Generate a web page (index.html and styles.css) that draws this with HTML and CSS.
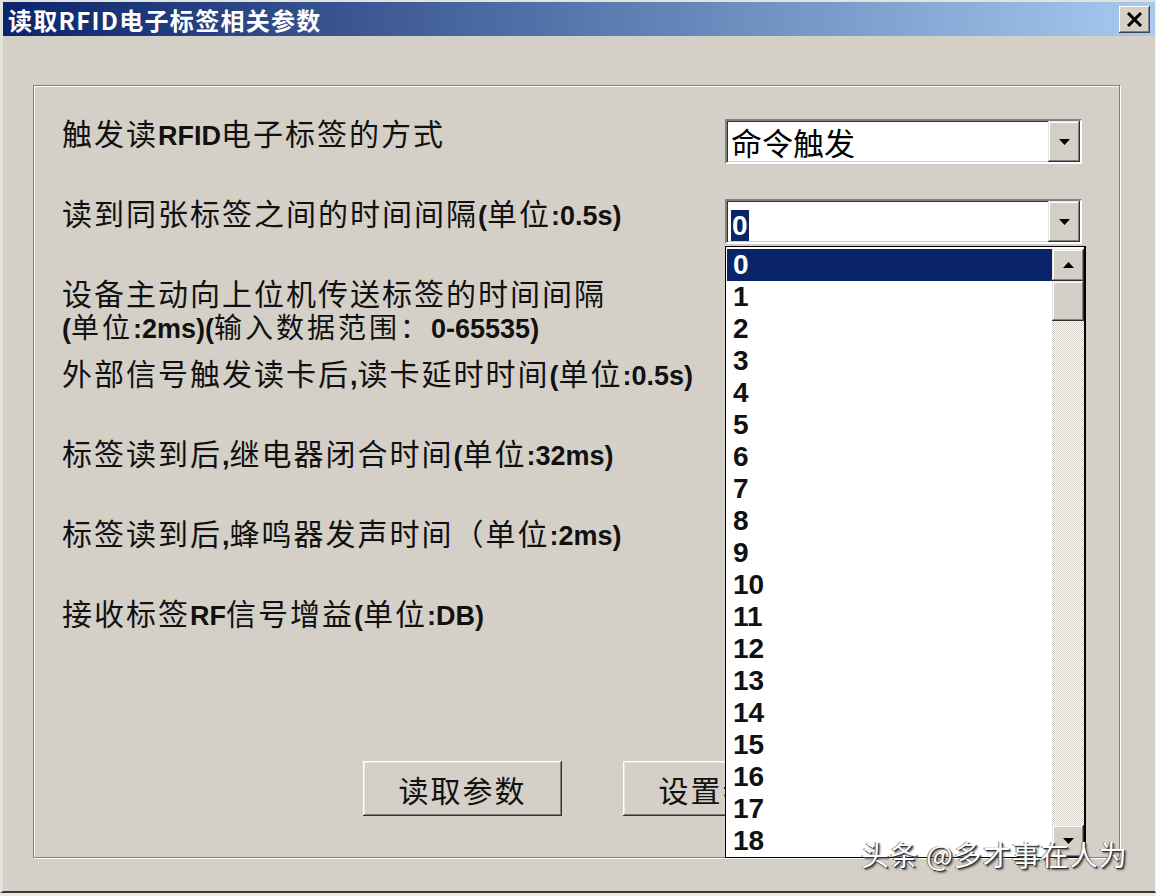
FILE: index.html
```html
<!DOCTYPE html>
<html lang="zh-CN">
<head>
  <meta charset="UTF-8" />
  <title>读取RFID电子标签相关参数</title>
  <link rel="stylesheet" href="styles.css">
</head>
<body>
  <div class="window">
    <div class="titlebar">
      <span class="title">读取RFID电子标签相关参数</span>
      <button class="close" type="button">
        <svg width="17" height="15" viewBox="0 0 17 15"><path d="M2 1L15 14M15 1L2 14" stroke="#000" stroke-width="3"/></svg>
      </button>
    </div>

    <div class="group">
      <div class="row">
        <div class="label">触发读<span class="en">RFID</span>电子标签的方式</div>
        <div class="combo">
          <span class="value">命令触发</span>
          <span class="drop"><svg width="11" height="6" viewBox="0 0 11 6"><path d="M0 0h11L5.5 6z"/></svg></span>
        </div>
      </div>

      <div class="row">
        <div class="label">读到同张标签之间的时间间隔<span class="en">(</span>单位<span class="en">:0.5s)</span></div>
        <div class="combo open">
          <span class="value"><span class="sel en">0</span></span>
          <span class="drop"><svg width="11" height="6" viewBox="0 0 11 6"><path d="M0 0h11L5.5 6z"/></svg></span>

          <!-- list opened under the combo -->
          <div class="list">
            <ul class="items" id="items"></ul>
            <div class="scrollbar">
              <span class="sbtn"><svg width="11" height="6" viewBox="0 0 11 6"><path d="M0 6h11L5.5 0z"/></svg></span>
              <span class="thumb"></span>
              <span class="track"></span>
              <span class="sbtn"><svg width="11" height="6" viewBox="0 0 11 6"><path d="M0 0h11L5.5 6z"/></svg></span>
            </div>
          </div>
        </div>
      </div>

      <div class="row">
        <div class="label">
          <div>设备主动向上位机传送标签的时间间隔</div>
          <div class="sub"><span class="en">(</span>单位<span class="en">:2ms)(</span>输入数据范围：<span class="en">0-65535)</span></div>
        </div>
        <div class="edit"></div>
      </div>

      <div class="row">
        <div class="label">外部信号触发读卡后<span class="en">,</span>读卡延时时间<span class="en">(</span>单位<span class="en">:0.5s)</span></div>
        <div class="edit"></div>
      </div>

      <div class="row">
        <div class="label">标签读到后<span class="en">,</span>继电器闭合时间<span class="en">(</span>单位<span class="en">:32ms)</span></div>
        <div class="edit"></div>
      </div>

      <div class="row">
        <div class="label">标签读到后<span class="en">,</span>蜂鸣器发声时间（单位<span class="en">:2ms)</span></div>
        <div class="edit"></div>
      </div>

      <div class="row">
        <div class="label">接收标签<span class="en">RF</span>信号增益<span class="en">(</span>单位<span class="en">:DB)</span></div>
        <div class="edit"></div>
      </div>

      <div class="buttons">
        <button class="btn" type="button">读取参数</button>
        <button class="btn" type="button">设置参数</button>
      </div>
    </div>

    <div class="watermark">头条 @多才事在人为</div>
  </div>

  <script>
    const items = document.getElementById("items");
    for (let i = 0; i <= 18; i++) {
      const li = document.createElement("li");
      li.textContent = i;
      if (i === 0) li.className = "active";
      items.appendChild(li);
    }
  </script>
</body>
</html>
```

FILE: styles.css
```css
body {
  margin: 0;
  background: #e6ece2;
  font-family: "Noto Sans CJK SC", sans-serif;
}
.window {
  position: relative;
  width: 1156px;
  height: 893px;
  box-sizing: border-box;
  background: #d4d0c8;
  border-top: 2px solid #e4e2dc;
  border-left: 3px solid #e4e2dc;
  border-right: 1px solid #f4f3ef;
  border-bottom: 2px solid #3a3a3a;
}
.en {
  font-family: "Liberation Sans", sans-serif;
  font-weight: bold;
  letter-spacing: 0;
}

/* title bar */
.titlebar {
  height: 34px;
  display: flex;
  align-items: center;
  justify-content: space-between;
  padding: 0 5px 0 5px;
  background: linear-gradient(to right, #0a246a, #a6caf0);
}
.title {
  color: white;
  font-size: 24px;
  font-weight: bold;
  letter-spacing: 1.3px;
}
.close {
  width: 31px;
  height: 27px;
  padding: 0;
  border: none;
  background: #d4d0c8;
  display: flex;
  align-items: center;
  justify-content: center;
  box-shadow: inset -1px -1px #404040, inset 1px 1px #fff, inset -2px -2px #808080;
}

/* group box */
.group {
  margin: 49px 0 0 30px;
  width: 1087px;
  height: 773px;
  box-sizing: border-box;
  border: 1px solid #808080;
  box-shadow: inset 1px 1px #fff, 1px 1px #fff;
  padding: 33px 37px 0 28px;
}
.row {
  display: flex;
  justify-content: space-between;
  align-items: flex-start;
  height: 80px;
}
.label {
  font-size: 30px;
  line-height: 32px;
  letter-spacing: 2px;
  color: #111;
  margin-top: -3px;
}
.label .en {
  font-size: 27px;
}
.sub {
  font-size: 28px;
  line-height: 24px;
  letter-spacing: 3px;
  margin-top: 6px;
}
.sub .en {
  font-size: 27px;
  letter-spacing: 0;
}

/* combo boxes and edits */
.combo, .edit {
  position: relative;
  width: 357px;
  height: 45px;
  box-sizing: border-box;
  background: white;
  border: 2px solid;
  border-color: #808080 #fff #fff #808080;
  box-shadow: inset 1px 1px #303030, inset -1px -1px #d4d0c8;
  display: flex;
  align-items: center;
}
.value {
  flex: 1;
  padding-left: 4px;
  font-size: 31px;
  line-height: 40px;
}
.sel {
  display: inline-block;
  background: #0a246a;
  color: white;
  font-size: 28px;
  line-height: 31px;
  padding: 0 1px;
}
.drop, .sbtn {
  width: 32px;
  height: 41px;
  box-sizing: border-box;
  background: #d4d0c8;
  display: flex;
  align-items: center;
  justify-content: center;
  box-shadow: inset -1px -1px #303030, inset 1px 1px #e8e6e0, inset -2px -2px #808080, inset 2px 2px #fff;
}

/* opened list */
.list {
  position: absolute;
  top: 45px;
  left: -2px;
  width: 361px;
  height: 612px;
  box-sizing: border-box;
  border: 1px solid #000;
  border-right-width: 2px;
  background: white;
  display: flex;
  z-index: 2;
}
.items {
  flex: 1;
  margin: 2px 0 0 1px;
  padding: 0;
  list-style: none;
}
.items li {
  height: 32px;
  line-height: 32px;
  padding-left: 6px;
  font-family: "Liberation Sans", sans-serif;
  font-weight: bold;
  font-size: 28px;
  color: #111;
}
.items li.active {
  background: #0a246a;
  color: white;
}
.scrollbar {
  width: 32px;
  margin: 2px 0 0 0;
  display: flex;
  flex-direction: column;
}
.sbtn {
  height: 32px;
}
.thumb {
  height: 40px;
  background: #d4d0c8;
  box-shadow: inset -1px -1px #303030, inset 1px 1px #e8e6e0, inset -2px -2px #808080, inset 2px 2px #fff;
}
.track {
  flex: 1;
  background: repeating-conic-gradient(#d4d0c8 0 25%, #fff 0 50%) 0 0 / 2px 2px;
}

/* buttons */
.buttons {
  display: flex;
  gap: 61px;
  margin: 82px 0 0 301px;
}
.btn {
  width: 199px;
  height: 55px;
  border: none;
  background: #d4d0c8;
  font-family: "Noto Sans CJK SC", sans-serif;
  font-size: 30px;
  letter-spacing: 2px;
  color: #111;
  box-shadow: inset -1px -1px #303030, inset 1px 1px #fff, inset -2px -2px #808080, inset 2px 2px #e8e6e0;
}

/* overlay text from the source picture */
.watermark {
  position: absolute;
  left: 858px;
  top: 832px;
  z-index: 3;
  font-size: 28px;
  color: white;
  letter-spacing: 1px;
  text-shadow: 1px 1px 0 #333, 2px 2px 2px #555, -1px 0 0 #777;
}
```
